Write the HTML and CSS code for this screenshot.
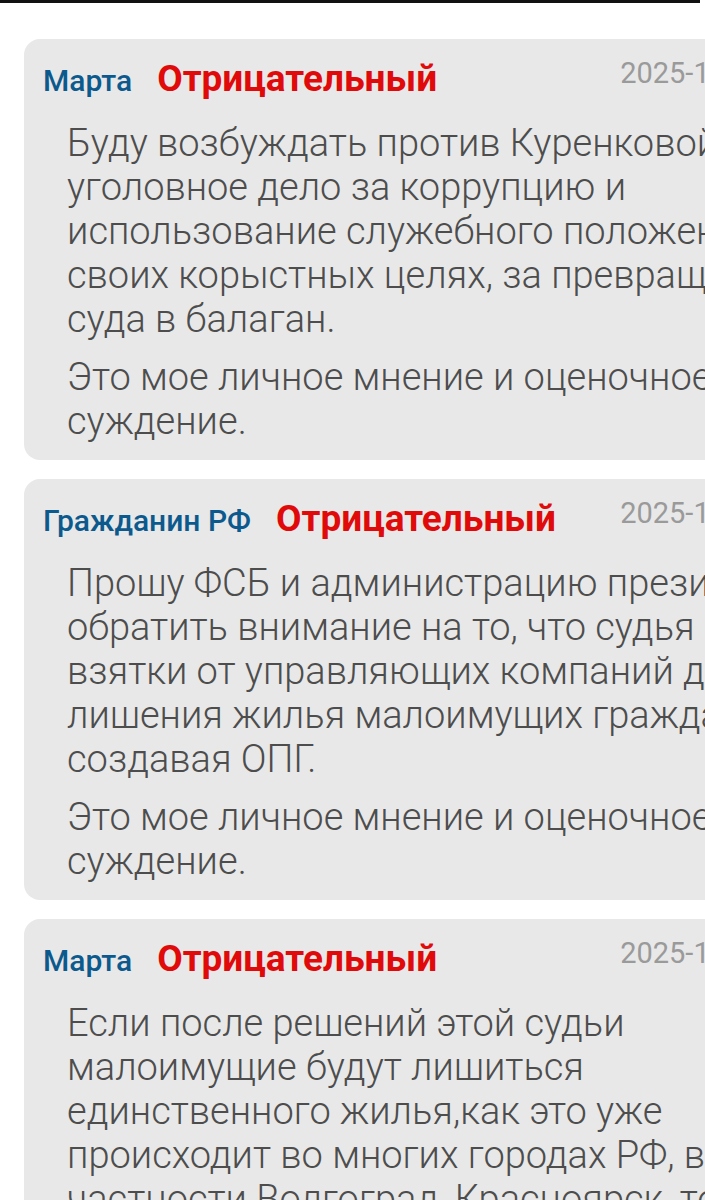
FILE: index.html
```html
<!DOCTYPE html>
<html lang="ru">
<head>
<meta charset="utf-8">
<link rel="stylesheet" href="styles.css">
</head>
<body>
<div class="topbar"></div>
<main class="list">
  <article class="card">
    <header class="head">
      <span class="name">Марта</span>
      <span class="status">Отрицательный</span>
      <span class="date">2025-10-14 09:15</span>
    </header>
    <div class="body">
      <p>Буду возбуждать против Куренковой уголовное дело за коррупцию и использование служебного положения в своих корыстных целях, за превращение суда в балаган.</p>
      <p>Это мое личное мнение и оценочное суждение.</p>
    </div>
  </article>
  <article class="card">
    <header class="head">
      <span class="name">Гражданин РФ</span>
      <span class="status">Отрицательный</span>
      <span class="date">2025-10-14 08:52</span>
    </header>
    <div class="body body-wide">
      <p>Прошу ФСБ и администрацию президента обратить внимание на то, что судья С. берет взятки от управляющих компаний для лишения жилья малоимущих граждан, создавая ОПГ.</p>
      <p>Это мое личное мнение и оценочное суждение.</p>
    </div>
  </article>
  <article class="card">
    <header class="head">
      <span class="name">Марта</span>
      <span class="status">Отрицательный</span>
      <span class="date">2025-10-13 22:40</span>
    </header>
    <div class="body">
      <p>Если после решений этой судьи малоимущие будут лишиться единственного жилья,как это уже происходит во многих городах РФ, в частности Волгоград, Красноярск, то это будет очень плохо для всех.</p>
    </div>
  </article>
</main>
</body>
</html>
```
FILE: styles.css
```css
html, body {
  margin: 0;
  padding: 0;
  background: #ffffff;
  overflow: hidden;
  width: 705px;
  height: 1200px;
}
body {
  font-family: Roboto, "Noto Sans", "Liberation Sans", sans-serif;
}
.topbar {
  width: 700px;
  height: 3px;
  background: #111111;
}
.list {
  display: flex;
  flex-direction: column;
  gap: 19px;
  padding: 36px 0 0 24px;
}
.card {
  width: 842px;
  background: #e8e8e8;
  border-radius: 16px;
  padding: 18px 20px 17px 19px;
  box-sizing: border-box;
}
.head {
  display: flex;
  align-items: baseline;
  height: 44px;
  line-height: 44px;
}
.name {
  font-size: 30px;
  font-weight: 500;
  color: #0c5a8d;
}
.status {
  margin-left: 25px;
  font-size: 37px;
  font-weight: 700;
  color: #e00a0a;
}
.date {
  margin-left: auto;
  align-self: flex-start;
  margin-top: 2px;
  font-size: 29px;
  line-height: 1;
  font-weight: 400;
  color: #9a9a9a;
}
.body {
  margin-top: 20px;
  padding-left: 24px;
  width: 740px;
  font-size: 38px;
  font-weight: 300;
  line-height: 44px;
  color: #4d4d4d;
}
.body-wide {
  width: 780px;
}
.body p {
  margin: 0 0 14px 0;
}
.body p:last-child {
  margin-bottom: 0;
}
```
